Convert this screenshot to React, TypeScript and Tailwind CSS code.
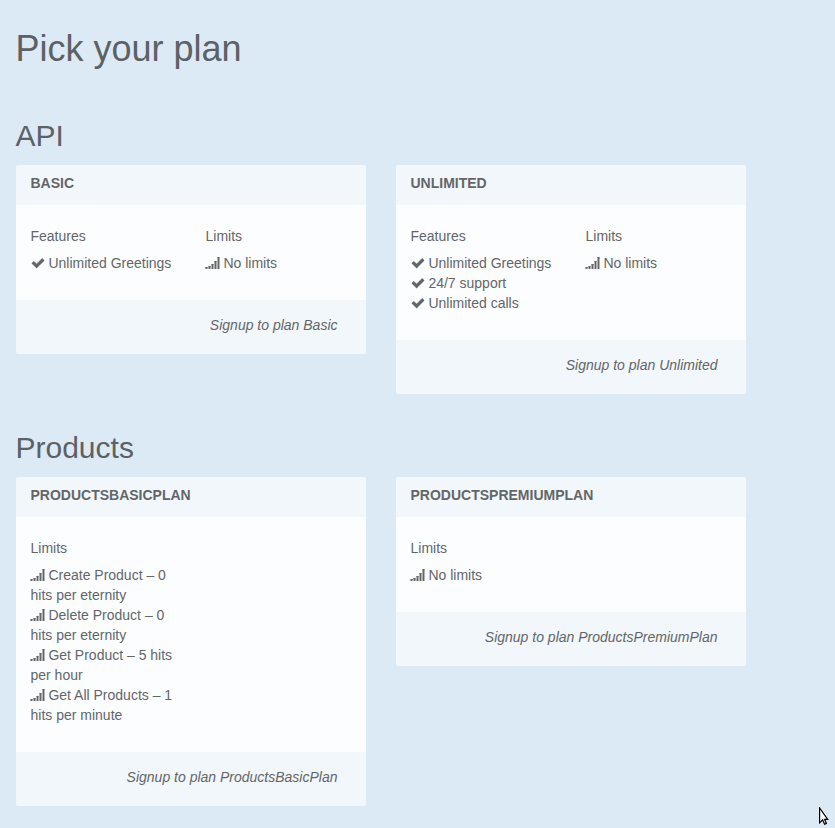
type IconName = 'check' | 'signal';

function Icon({ name }: { name: IconName }) {
  if (name === 'check') {
    return (
      <svg viewBox="0 0 1792 1792" className="inline-block h-[14px] w-[14px] fill-current align-[-2px]">
        <path
          d="M1671 566q0 40-28 68l-724 724-136 136q-28 28-68 28t-68-28l-136-136-362-362q-28-28-28-68t28-68l136-136q28-28 68-28t68 28l294 295 656-657q28-28 68-28t68 28l136 136q28 28 28 68z"
          stroke="currentColor"
          strokeWidth="50"
        />
      </svg>
    );
  }
  return (
    <svg viewBox="0 0 14 14" className="inline-block h-[14px] w-[14px] overflow-visible fill-current align-[-3px]">
      <rect x="-.5" y="10" width="2" height="2" rx=".2" />
      <rect x="2.5" y="9" width="2" height="3" rx=".2" />
      <rect x="5.5" y="7" width="2" height="5" rx=".2" />
      <rect x="8.5" y="4" width="2" height="8" rx=".2" />
      <rect x="11.5" y="0" width="2" height="12" rx=".2" />
    </svg>
  );
}

function Group({ title, icon, items }: { title: string; icon: IconName; items: string[] }) {
  return (
    <section className="w-[175px] shrink-0 pr-[30px]">
      <h3 className="mb-[7px]">{title}</h3>
      <ul>
        {items.map((item) => (
          <li key={item}>
            <Icon name={icon} /> {item}
          </li>
        ))}
      </ul>
    </section>
  );
}

function Plan({ name, label, features, limits }: { name: string; label: string; features?: string[]; limits: string[] }) {
  return (
    <article className="w-[350px] overflow-hidden rounded-[3px] bg-[#fcfdfe]">
      <header className="h-10 bg-[#f2f7fb] px-[14.5px] pt-2 font-bold">{name}</header>
      <div className="flex pl-[14.5px] pt-[21px] pb-[27px]">
        {features && <Group title="Features" icon="check" items={features} />}
        <Group title="Limits" icon="signal" items={limits} />
      </div>
      <footer className="h-[54px] bg-[#f2f7fb] pt-[15px] pr-[28.5px] text-right italic">Signup to plan {label}</footer>
    </article>
  );
}

export default function App() {
  return (
    <main className="relative h-[828px] w-[835px] overflow-hidden bg-[#dceaf5] pl-4 pt-[29px] font-['Liberation_Sans',Arial,sans-serif] text-sm leading-5 text-[#636669]">
      <h1 className="-ml-[0.5px] text-[36px] leading-10 text-[#5c6165]">Pick your plan</h1>
      <h2 className="-ml-[0.5px] mt-[50px] mb-[13px] text-[30px] leading-[33px] text-[#5c6165]">API</h2>
      <div className="flex items-start gap-[30px]">
        <Plan name="BASIC" label="Basic" features={['Unlimited Greetings']} limits={['No limits']} />
        <Plan
          name="UNLIMITED"
          label="Unlimited"
          features={['Unlimited Greetings', '24/7 support', 'Unlimited calls']}
          limits={['No limits']}
        />
      </div>
      <h2 className="-ml-[0.5px] mt-[37px] mb-[13px] text-[30px] leading-[33px] text-[#5c6165]">Products</h2>
      <div className="flex items-start gap-[30px]">
        <Plan
          name="PRODUCTSBASICPLAN"
          label="ProductsBasicPlan"
          limits={[
            'Create Product – 0 hits per eternity',
            'Delete Product – 0 hits per eternity',
            'Get Product – 5 hits per hour',
            'Get All Products – 1 hits per minute',
          ]}
        />
        <Plan name="PRODUCTSPREMIUMPLAN" label="ProductsPremiumPlan" limits={['No limits']} />
      </div>
      <svg viewBox="0 0 10 18" className="absolute left-[819px] top-[807px] h-[18px] w-[10px]">
        <path d="M.6 1v14.8l3-3 2 4.4 1.8-.8-1.8-4.1h3.1z" fill="white" stroke="black" strokeWidth="1.2" />
      </svg>
    </main>
  );
}
